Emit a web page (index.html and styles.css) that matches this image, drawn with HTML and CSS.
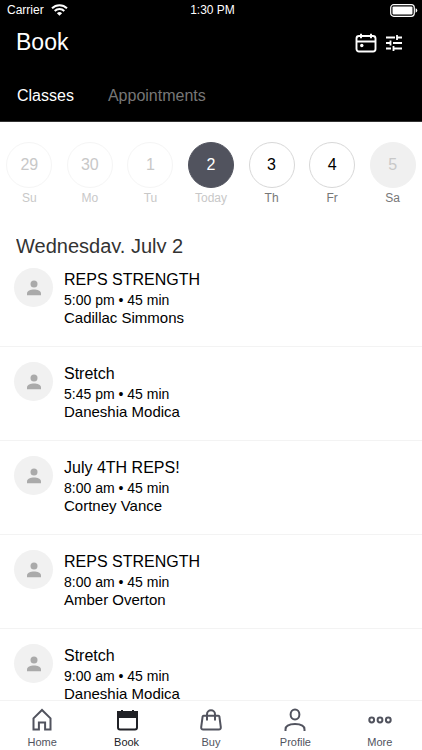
FILE: index.html
```html
<!DOCTYPE html>
<html lang="en">
<head>
<meta charset="utf-8">
<meta name="viewport" content="width=device-width, initial-scale=1">
<title>Book</title>
<link rel="stylesheet" href="styles.css">
</head>
<body>
<svg class="sprite" aria-hidden="true">
  <symbol id="person" viewBox="0 0 16 16"><circle cx="8" cy="4" r="3.5"/><path d="M1 15v-1.6C1 10.800 4.600 9.500 8 9.500s7 1.300 7 3.900V15q0 .3-.3.300H1.300Q1 15.300 1 15z"/></symbol>
</svg>
<header class="header">
  <div class="status">
    <span class="carrier">Carrier
      <svg width="17" height="12" viewBox="0 0 17 12" fill="none" stroke="#fff" stroke-width="2"><path d="M1 4.300a10.700 10.700 0 0 1 15 0M3.700 7a6.900 6.900 0 0 1 9.600 0"/><path d="M8.500 11.800 5.900 9.200a3.700 3.700 0 0 1 5.200 0z" fill="#fff" stroke="none"/></svg>
    </span>
    <span>1:30 PM</span>
    <svg class="battery" width="28" height="13" viewBox="0 0 28 13"><rect x=".7" y=".7" width="23.600" height="11.600" rx="3" fill="none" stroke="#fff" stroke-width="1.200"/><rect x="2.500" y="2.500" width="20" height="8" rx="1" fill="#fff"/><path d="M25.600 4.300q1.700.6 1.700 2.200t-1.700 2.200z" fill="#fff"/></svg>
  </div>
  <div class="titlebar">
    <h1>Book</h1>
    <button class="icon-button" aria-label="Choose date"><svg width="22" height="20" viewBox="0 0 22 20" fill="none" stroke="#fff" stroke-width="1.900"><rect x="1.500" y="3" width="19" height="15.500" rx="2.500"/><path d="M1.500 8.500h19M6 .8v4.400M16 .8v4.400"/><circle cx="6.800" cy="12.500" r="1.700" fill="#fff" stroke="none"/></svg></button>
    <button class="icon-button" aria-label="Filters"><svg width="18" height="18" viewBox="0 0 18 18" fill="none" stroke="#fff" stroke-width="1.800"><path d="M1 3.500h9M12 3.500h5M12 1v5M1 9h4M8 9h9M5.500 6.500v5M1 14.500h5M8 14.500h9M8.500 12v5"/></svg></button>
  </div>
  <nav class="tabs"><a href="#classes" class="active">Classes</a><a href="#appointments">Appointments</a></nav>
</header>
<main class="main">
  <div class="dates">
    <button class="day past"><span class="num">29</span><span>Su</span></button>
    <button class="day past"><span class="num">30</span><span>Mo</span></button>
    <button class="day past"><span class="num">1</span><span>Tu</span></button>
    <button class="day today"><span class="num">2</span><span>Today</span></button>
    <button class="day"><span class="num">3</span><span>Th</span></button>
    <button class="day"><span class="num">4</span><span>Fr</span></button>
    <button class="day closed"><span class="num">5</span><span>Sa</span></button>
  </div>
  <h2>Wednesday, July 2</h2>
  <ul class="list" id="classes">
    <li><span class="avatar"><svg><use href="#person"/></svg></span><div class="info"><h3>REPS STRENGTH</h3><p class="time">5:00 pm • 45 min</p><p class="coach">Cadillac Simmons</p></div></li>
    <li><span class="avatar"><svg><use href="#person"/></svg></span><div class="info"><h3>Stretch</h3><p class="time">5:45 pm • 45 min</p><p class="coach">Daneshia Modica</p></div></li>
    <li><span class="avatar"><svg><use href="#person"/></svg></span><div class="info"><h3>July 4TH REPS!</h3><p class="time">8:00 am • 45 min</p><p class="coach">Cortney Vance</p></div></li>
    <li><span class="avatar"><svg><use href="#person"/></svg></span><div class="info"><h3>REPS STRENGTH</h3><p class="time">8:00 am • 45 min</p><p class="coach">Amber Overton</p></div></li>
    <li><span class="avatar"><svg><use href="#person"/></svg></span><div class="info"><h3>Stretch</h3><p class="time">9:00 am • 45 min</p><p class="coach">Daneshia Modica</p></div></li>
  </ul>
</main>
<nav class="bottom">
  <a href="#home"><svg viewBox="0 0 24 24"><path d="M3.500 21.500V10.300L12 2l8.500 8.300v11.200h-5.400v-7H8.900v7z"/></svg>Home</a>
  <a href="#book" class="active"><svg viewBox="0 0 24 24"><rect x="3" y="4" width="19" height="17.500" rx="2"/><path d="M3 4h19v5H3zM7 2v3M18 2v3" fill="currentColor"/></svg>Book</a>
  <a href="#buy"><svg viewBox="0 0 24 24"><path d="M4.600 7.800h14.800q.8 0 1 .8l1.400 10.600q.2 2.300-2 2.300H4.200q-2.200 0-2-2.300L3.600 8.600q.2-.8 1-.8zM8 12.500V6.300a4 4 0 0 1 8 0v6.200"/></svg>Buy</a>
  <a href="#profile"><svg viewBox="0 0 24 24"><ellipse cx="12" cy="6.500" rx="4.400" ry="5"/><path d="M2.500 23v-1.500C2.500 17.500 6.500 16 12 16s9.500 1.500 9.500 5.500V23"/></svg>Profile</a>
  <a href="#more"><svg viewBox="0 0 24 24"><circle cx="3.700" cy="12" r="2.400"/><circle cx="12" cy="12" r="2.400"/><circle cx="20.300" cy="12" r="2.400"/></svg>More</a>
</nav>
</body>
</html>
```
FILE: styles.css
```css
* { box-sizing: border-box; margin: 0; padding: 0; }
body {
  display: flex;
  flex-direction: column;
  height: 100vh;
  overflow: hidden;
  background: #fff;
  color: #000;
  font-family: "Liberation Sans", Arial, sans-serif;
}
h1, h2, h3 { font-weight: 400; }
a { color: inherit; text-decoration: none; }
button { border: 0; background: none; font: inherit; color: inherit; }
svg { display: block; }
.sprite { display: none; }

.header {
  flex: none;
  background: #000;
  color: #fff;
  border-bottom: 1px solid #333;
}
.status {
  display: grid;
  grid-template-columns: 1fr auto 1fr;
  align-items: center;
  height: 20px;
  padding: 0 4px 0 7px;
  font-size: 12px;
}
.carrier { display: flex; align-items: center; gap: 7px; }
.battery { justify-self: end; }
.titlebar {
  display: flex;
  align-items: center;
  gap: 8px;
  height: 45px;
  padding: 0 19px 0 16px;
}
h1 { flex: 1; font-size: 23px; }
.tabs {
  display: flex;
  gap: 34px;
  height: 56px;
  padding: 21px 17px 0;
  font-size: 16px;
  line-height: 20px;
}
.tabs a { color: #777; }
.tabs .active { color: #fff; }

.main { flex: 1; min-height: 0; overflow: hidden; }
.dates {
  display: grid;
  grid-template-columns: repeat(7, 1fr);
  margin: 0 -1px;
  padding-top: 20px;
}
.day {
  display: flex;
  flex-direction: column;
  align-items: center;
  gap: 2px;
  font-size: 12px;
  line-height: 16px;
  color: #777;
}
.num {
  display: grid;
  place-items: center;
  width: 46px;
  height: 46px;
  border: 1px solid #d8d8d8;
  border-radius: 50%;
  color: #000;
  font-size: 16px;
}
.past, .past .num { color: #c8c8c8; }
.past .num { border-color: #f5f5f5; }
.today { color: #c8c8c8; }
.today .num { background: #51535e; border-color: #51535e; color: #fff; }
.closed .num { background: #f0f0f0; border-color: #f0f0f0; color: #c8c8c8; }

h2 {
  height: 19px;
  margin: 28px 16px 0;
  overflow: hidden;
  font-size: 20px;
  line-height: 24px;
  color: #333;
}
.list { list-style: none; }
.list li {
  display: flex;
  gap: 11px;
  height: 94px;
  padding: 15px 14px 0;
  border-bottom: 1px solid #f3f3f3;
}
.avatar {
  display: grid;
  place-items: center;
  width: 39px;
  height: 39px;
  border-radius: 50%;
  background: #f1f1f1;
  color: #aaa;
}
.avatar svg { width: 16px; height: 16px; fill: currentColor; }
.info { padding-top: 1px; }
h3 { font-size: 16px; line-height: 22px; }
.list p { line-height: 18px; }
.time { font-size: 14px; }
.coach { font-size: 15px; }

.bottom {
  flex: none;
  display: grid;
  grid-template-columns: repeat(5, 1fr);
  height: 50px;
  padding-top: 7px;
  border-top: 1px solid #f3f3f3;
  background: #fff;
  color: #51535e;
  font-size: 11px;
  line-height: 14px;
}
.bottom a { display: flex; flex-direction: column; align-items: center; gap: 3px; }
.bottom .active { color: #202126; }
.bottom svg {
  width: 24px;
  height: 24px;
  overflow: visible;
  fill: none;
  stroke: currentColor;
  stroke-width: 2;
}
```
